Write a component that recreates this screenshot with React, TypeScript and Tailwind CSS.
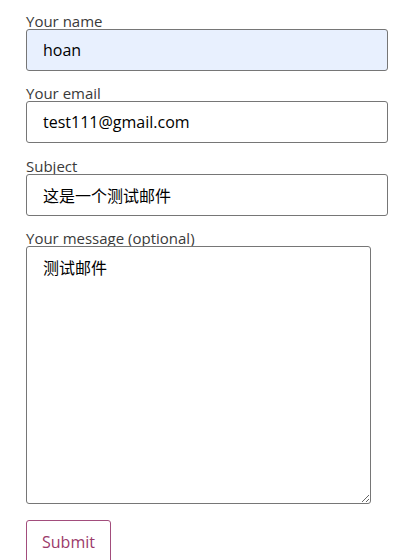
export default function App() {
  const font = { fontFamily: '"Open Sans", "Noto Sans CJK SC", sans-serif' };
  return (
    <div className="w-[400px] h-[560px] overflow-hidden bg-white" style={font}>
      <form className="ml-[26px] pt-[13px] w-[362px] flex flex-col">
        <label className="block text-[15px] leading-[16px] text-[#3a3a3a]">Your name</label>
        <input
          defaultValue="hoan"
          className="h-[42px] w-full rounded-[3px] border border-[#767676] bg-[#e8f0fe] px-[16px] text-[16px] text-black outline-none"
        />
        <label className="mt-[14px] block text-[15px] leading-[16px] text-[#3a3a3a]">Your email</label>
        <input
          defaultValue="test111@gmail.com"
          className="h-[42px] w-full rounded-[3px] border border-[#767676] bg-white px-[16px] text-[16px] text-black outline-none"
        />
        <label className="mt-[15px] block text-[15px] leading-[16px] text-[#3a3a3a]">Subject</label>
        <input
          defaultValue="这是一个测试邮件"
          className="h-[42px] w-full rounded-[3px] border border-[#767676] bg-white px-[16px] text-[16px] text-black outline-none"
        />
        <label className="mt-[14px] block text-[15px] leading-[16px] text-[#3a3a3a]">Your message (optional)</label>
        <textarea
          defaultValue="测试邮件"
          className="h-[258px] w-[345px] rounded-[3px] border border-[#767676] bg-white px-[16px] py-[9px] text-[16px] text-black outline-none"
        />
        <div className="mt-[16px]">
          <button
            type="button"
            className="h-[44px] rounded-[3px] border border-[#a24d7c] bg-white px-[15px] text-[16px] text-[#9b3a6a]"
          >
            Submit
          </button>
        </div>
      </form>
    </div>
  );
}
